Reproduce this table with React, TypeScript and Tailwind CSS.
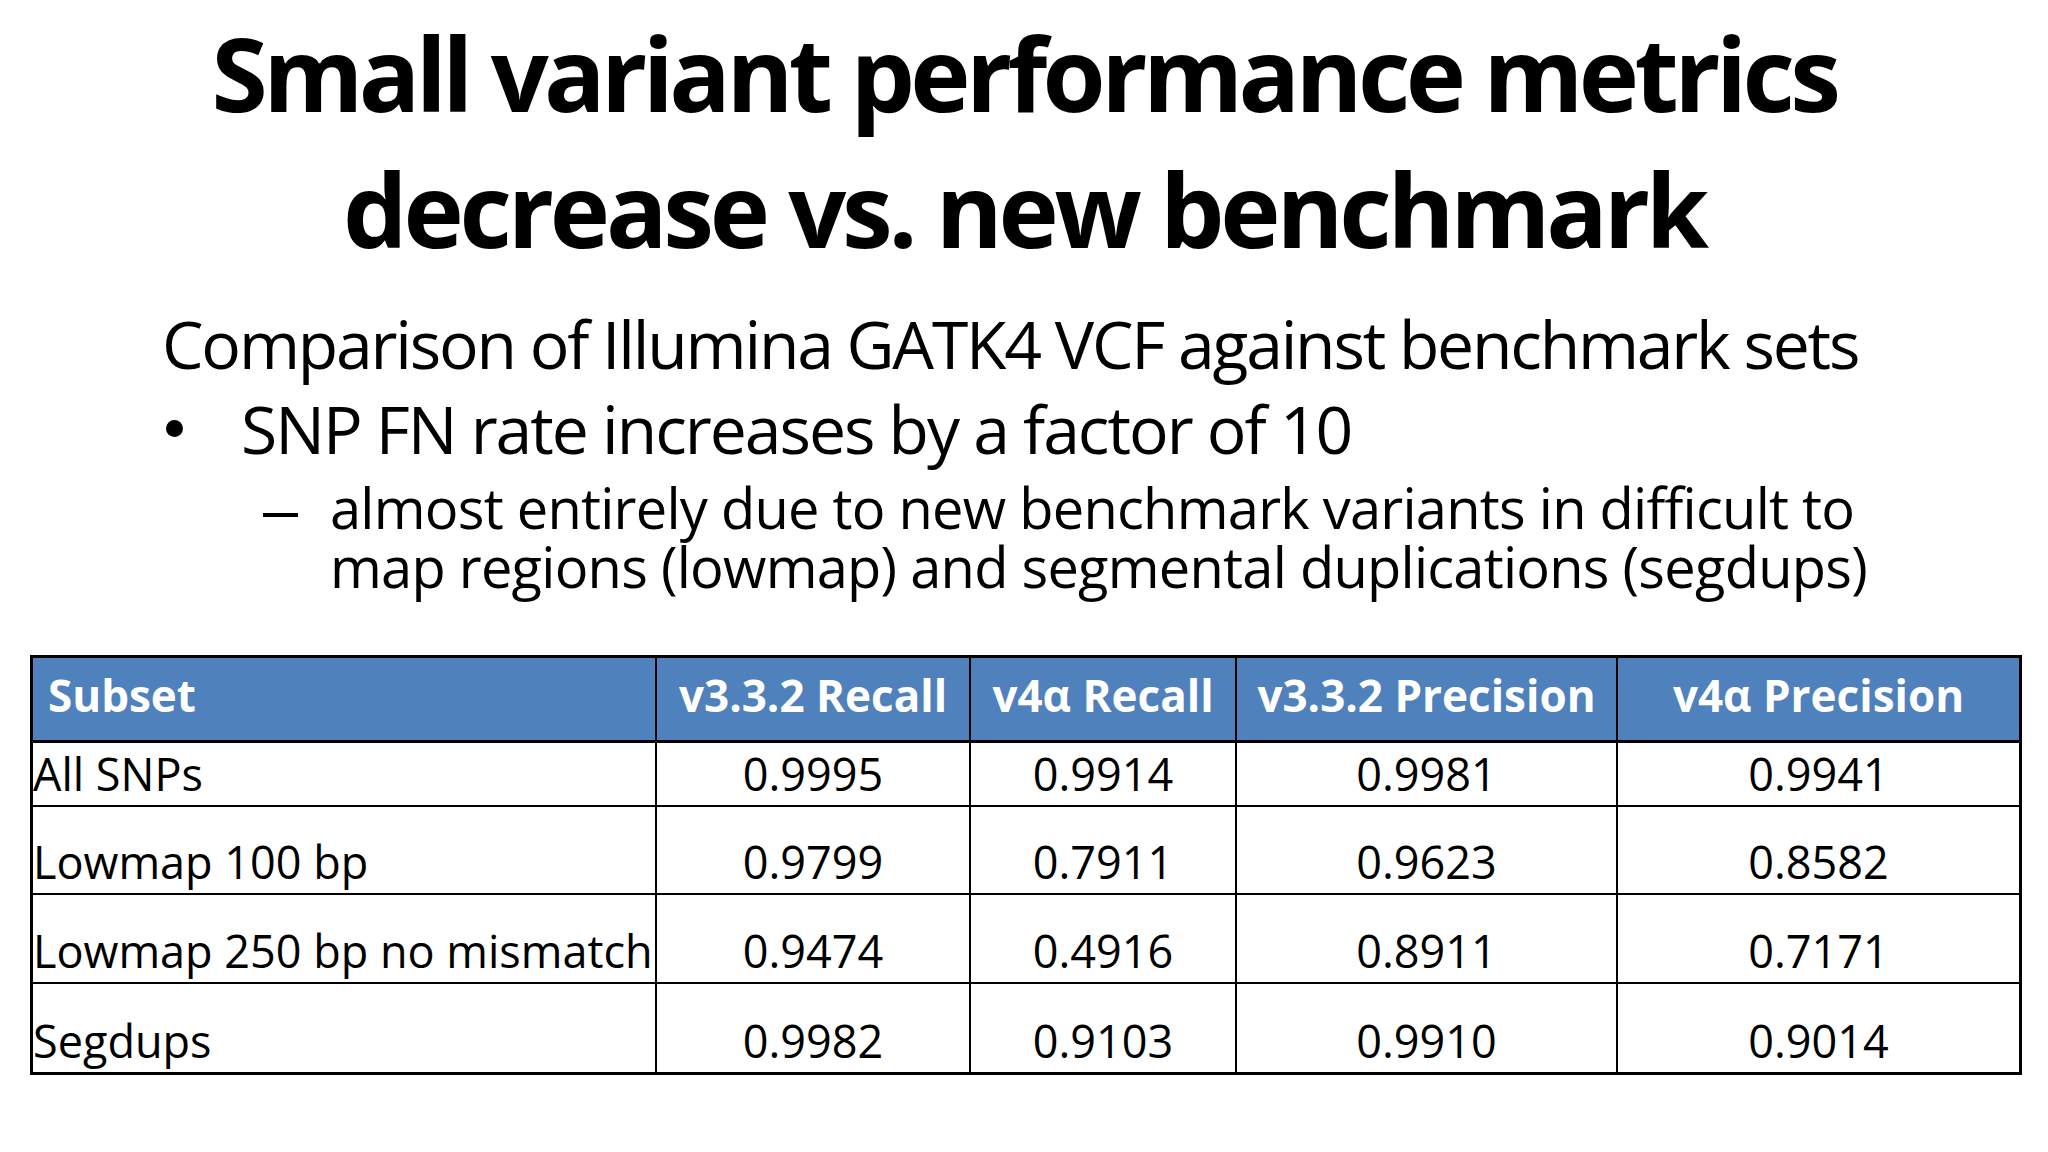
import React from "react";

const rows = [
  { name: "All SNPs", v: ["0.9995", "0.9914", "0.9981", "0.9941"], h: "h-[62px]" },
  { name: "Lowmap 100 bp", v: ["0.9799", "0.7911", "0.9623", "0.8582"], h: "h-[86px]" },
  { name: "Lowmap 250 bp no mismatch", v: ["0.9474", "0.4916", "0.8911", "0.7171"], h: "h-[87px]" },
  { name: "Segdups", v: ["0.9982", "0.9103", "0.9910", "0.9014"], h: "h-[88px]" },
];

const headers = ["v3.3.2 Recall", "v4α Recall", "v3.3.2 Precision", "v4α Precision"];

export default function App() {
  return (
    <div className="w-[2048px] h-[1152px] bg-white text-black [font-family:'Open_Sans',sans-serif] overflow-hidden">
      <div className="pt-[5px] flex flex-col items-center font-bold text-[102px] leading-[136px] whitespace-nowrap">
        <div className="tracking-[-4.6px]">Small variant performance metrics</div>
        <div className="tracking-[-4.2px]">decrease vs. new benchmark</div>
      </div>

      <div className="mt-[24px] pl-[162px] whitespace-nowrap">
        <div className="text-[66px] leading-[85px] tracking-[-2.2px]">
          Comparison of Illumina GATK4 VCF against benchmark sets
        </div>
        <div className="flex text-[66px] leading-[85px] tracking-[-2px]">
          <span className="w-[79px] h-[85px] flex items-center pl-[4px]">
            <span className="block w-[17px] h-[17px] rounded-full bg-black" />
          </span>
          <span>SNP FN rate increases by a factor of 10</span>
        </div>
        <div className="mt-[7px] flex text-[56px] leading-[59px] tracking-[-0.75px]">
          <span className="w-[168px] pl-[101px] pt-[35px]">
            <span className="block w-[35px] h-[4px] bg-black" />
          </span>
          <div className="flex flex-col">
            <span>almost entirely due to new benchmark variants in difficult to</span>
            <span>map regions (lowmap) and segmental duplications (segdups)</span>
          </div>
        </div>
      </div>

      <div className="mt-[59px] ml-[30px] w-[1992px] bg-black p-[3px] grid grid-cols-[622px_312px_264px_379px_401px] gap-[2px]">
        <div className="h-[83px] bg-[#4f81bd] border-b border-black flex items-center pl-[15px] pb-[8px] text-white font-bold text-[44px] leading-none whitespace-nowrap">
          Subset
        </div>
        {headers.map((h) => (
          <div
            key={h}
            className="h-[83px] bg-[#4f81bd] border-b border-black flex items-center justify-center pb-[8px] text-white font-bold text-[44px] leading-none whitespace-nowrap"
          >
            {h}
          </div>
        ))}
        {rows.map((r) => (
          <React.Fragment key={r.name}>
            <div className={`${r.h} bg-white flex items-end pb-[9px] text-[45px] leading-none whitespace-nowrap`}>
              {r.name}
            </div>
            {r.v.map((val, i) => (
              <div
                key={i}
                className={`${r.h} bg-white flex items-end justify-center pb-[9px] text-[45px] leading-none whitespace-nowrap`}
              >
                {val}
              </div>
            ))}
          </React.Fragment>
        ))}
      </div>
    </div>
  );
}
